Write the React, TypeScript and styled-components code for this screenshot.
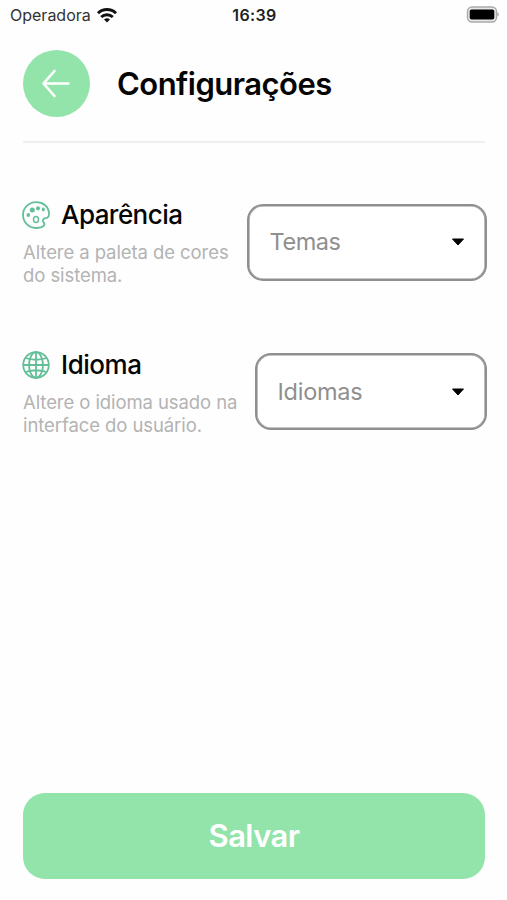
import React from "react";
import styled, { createGlobalStyle } from "styled-components";

const GlobalStyle = createGlobalStyle`
  *, *::before, *::after { box-sizing: border-box; }
  body { margin: 0; background: #fff; }
  button { font: inherit; border: 0; padding: 0; cursor: pointer; }
`;

const Screen = styled.div`
  width: 507px;
  height: 900px;
  display: flex;
  flex-direction: column;
  background: #fefefe;
  color: #050505;
  font-family: Inter, "Liberation Sans", sans-serif;
  overflow: hidden;
`;

const StatusBar = styled.div`
  height: 30px;
  flex: none;
  display: grid;
  grid-template-columns: 1fr auto 1fr;
  align-items: center;
  padding: 0 8px 0 10px;
`;

const Carrier = styled.div`
  display: flex;
  align-items: center;
  gap: 6px;
  font-size: 16px;
  line-height: 20px;
  color: #333;
`;

const Clock = styled.div`
  font-size: 16px;
  font-weight: 600;
  line-height: 20px;
  letter-spacing: 0.4px;
  color: #222;
`;

const BatterySlot = styled.div`
  display: flex;
  justify-content: flex-end;
  padding-bottom: 2px;
`;

const Header = styled.header`
  display: flex;
  align-items: center;
  gap: 27px;
  flex: none;
  height: 113px;
  margin: 0 22px 0 23px;
  padding: 20px 0 24px;
  border-bottom: 2px solid #efefef;
`;

const BackButton = styled.button`
  display: flex;
  align-items: center;
  justify-content: center;
  flex: none;
  width: 67px;
  height: 67px;
  padding-right: 2px;
  border-radius: 50%;
  background: #93e4aa;
`;

const Title = styled.h1`
  margin: 0;
  font-size: 31px;
  font-weight: 600;
  line-height: 40px;
  letter-spacing: -0.52px;
`;

const Settings = styled.main`
  flex: 1;
  display: flex;
  flex-direction: column;
  gap: 61px;
  padding: 56px 20.5px 0 22px;
`;

const Row = styled.section`
  display: flex;
  justify-content: space-between;
  align-items: flex-start;
  height: 88.5px;
`;

const Heading = styled.div`
  display: flex;
  align-items: center;
  gap: 11px;
  height: 32px;
`;

const Name = styled.h2<{ $tracking: number }>`
  margin: 0;
  font-size: 26px;
  font-weight: 500;
  line-height: 32px;
  letter-spacing: ${(p) => p.$tracking}px;
`;

const Description = styled.p`
  margin: 10px 0 0 1px;
  font-size: 18.5px;
  line-height: 23px;
  letter-spacing: -0.08px;
  color: #b3b3b3;
  white-space: pre-line;
`;

const Select = styled.button<{ $width: number }>`
  display: flex;
  align-items: center;
  justify-content: space-between;
  flex: none;
  width: ${(p) => p.$width}px;
  height: 77px;
  margin-top: 4.5px;
  padding: 0 20px 0 21px;
  border: 2px solid #8f8f8f;
  border-radius: 16px;
  box-shadow: inset 0 0 0 0.6px #8f8f8f;
  background: #fff;
  color: #8f8f8f;
`;

const Placeholder = styled.span<{ $tracking: number }>`
  font-size: 23.5px;
  line-height: 30px;
  letter-spacing: ${(p) => p.$tracking}px;
`;

const SaveButton = styled.button`
  flex: none;
  height: 86px;
  margin: 0 22px 21.5px 23px;
  padding-top: 1px;
  border-radius: 22px;
  background: #93e4aa;
`;

const SaveLabel = styled.span`
  font-size: 31px;
  font-weight: 600;
  line-height: 40px;
  letter-spacing: -0.6px;
  color: #fff;
`;

const Wifi = () => (
  <svg width="20" height="15" viewBox="0 0 20 15" fill="none" stroke="#111" strokeWidth="2.9">
    <path d="M1 5.3C6 .3 14 .3 19 5.3" />
    <path d="M4.2 9C7.5 5.9 12.5 5.9 15.8 9" />
    <path d="M10 14.5 7 11.5Q10 9 13 11.5Z" fill="#111" stroke="none" />
  </svg>
);

const Battery = () => (
  <svg width="33" height="17" viewBox="0 0 33 17">
    <rect x="1.5" y="1" width="29" height="15" rx="4.5" fill="#e8e8e8" stroke="#aaa" strokeWidth="1.4" />
    <rect x="3.7" y="3.5" width="24.6" height="10" rx="1.8" fill="#000" />
    <path d="M31.4 6.3q1.5 .6 1.5 2.2t-1.5 2.2Z" fill="#aaa" />
  </svg>
);

const ArrowLeft = () => (
  <svg width="30" height="30" viewBox="0 0 30 30" fill="none" stroke="#fff" strokeWidth="2.6" strokeLinecap="round" strokeLinejoin="round">
    <path d="M27.5 14.5H2.5M13.5 2 2.5 14.5 13.5 27" />
  </svg>
);

const Palette = () => (
  <svg width="28" height="28" viewBox="0 0 28 28" fill="none" stroke="#62bf98" strokeWidth="1.8">
    <path d="M14.5 1.2C6.8 1.2 1 6.6 1 13.8 1 21.2 6.7 27 13.8 27c2.8 0 5.8-.7 7.4-1.8 1.5-1 1.6-2.3.6-3.5-1.1-1.4-1.2-3.1.1-4 1.1-.8 2.4-.3 3.5-1 1.3-.8 1.7-2.4 1.6-4.4C26.6 5.7 21.2 1.2 14.5 1.2Z" />
    <ellipse cx="14" cy="18.5" rx="2.5" ry="3" strokeWidth="1.5" />
    <g fill="#62bf98" stroke="none">
      <ellipse cx="6.3" cy="14" rx="1.8" ry="2" />
      <circle cx="10.3" cy="9" r="2.5" />
      <ellipse cx="16" cy="7.3" rx="2" ry="2.1" />
      <ellipse cx="21.3" cy="8.6" rx="1.5" ry="2" />
    </g>
  </svg>
);

const Globe = () => (
  <svg width="28" height="28" viewBox="0 0 28 28" fill="none" stroke="#62bf98" strokeWidth="1.8">
    <circle cx="14" cy="14" r="12.8" />
    <ellipse cx="14" cy="14" rx="7" ry="12.8" />
    <path d="M14 1.2V26.8M1.2 14H26.8M3.3 7Q14 10.5 24.7 7M3.3 21Q14 17.5 24.7 21" />
  </svg>
);

const Caret = () => (
  <svg width="14" height="8" viewBox="0 0 14 8">
    <path d="M1.5 1H12.5L7 7Z" fill="#000" stroke="#000" strokeWidth="1" strokeLinejoin="round" />
  </svg>
);

export default function App() {
  return (
    <>
      <GlobalStyle />
      <Screen>
        <StatusBar>
          <Carrier>
            Operadora
            <Wifi />
          </Carrier>
          <Clock>16:39</Clock>
          <BatterySlot>
            <Battery />
          </BatterySlot>
        </StatusBar>
        <Header>
          <BackButton aria-label="Voltar">
            <ArrowLeft />
          </BackButton>
          <Title>Configurações</Title>
        </Header>
        <Settings>
          <Row>
            <div>
              <Heading>
                <Palette />
                <Name $tracking={-0.55}>Aparência</Name>
              </Heading>
              <Description>{"Altere a paleta de cores\ndo sistema."}</Description>
            </div>
            <Select $width={240}>
              <Placeholder $tracking={-0.45}>Temas</Placeholder>
              <Caret />
            </Select>
          </Row>
          <Row>
            <div>
              <Heading>
                <Globe />
                <Name $tracking={-0.45}>Idioma</Name>
              </Heading>
              <Description>{"Altere o idioma usado na\ninterface do usuário."}</Description>
            </div>
            <Select $width={232}>
              <Placeholder $tracking={-0.25}>Idiomas</Placeholder>
              <Caret />
            </Select>
          </Row>
        </Settings>
        <SaveButton>
          <SaveLabel>Salvar</SaveLabel>
        </SaveButton>
      </Screen>
    </>
  );
}
